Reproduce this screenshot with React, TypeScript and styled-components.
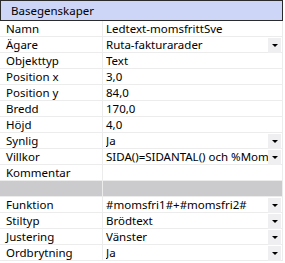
import React from 'react';
import styled, { createGlobalStyle } from 'styled-components';

const GlobalStyle = createGlobalStyle`
    html, body {
        margin: 0;
        padding: 0;
        background: #ffffff;
    }
    body {
        font-family: "Noto Sans", "DejaVu Sans", sans-serif;
        font-size: 11.5px;
        color: #000;
    }
`;

const Grid = styled.div`
    width: 283px;
    display: flex;
    flex-direction: column;
`;

const Header = styled.div`
    height: 19px;
    border: 1px solid #2b2b2b;
    background: #cdd6f6;
    display: flex;
    align-items: center;
    padding-left: 10px;
    line-height: 18px;
`;

const Row = styled.div<{ $blank?: boolean }>`
    height: 15px;
    display: grid;
    grid-template-columns: 103px 1fr;
    border-bottom: 1px solid #ececec;
    background: ${({ $blank }) => ($blank ? '#cbcbcd' : '#ffffff')};
`;

const Label = styled.div`
    padding-left: 6px;
    line-height: 16px;
    white-space: nowrap;
    overflow: hidden;
    border-right: 1px solid #ececec;
`;

const Value = styled.div`
    display: flex;
    align-items: center;
    min-width: 0;
    padding-left: 3px;
    border-right: 1px solid #ececec;
`;

const ValueText = styled.span`
    flex: 1;
    line-height: 16px;
    white-space: nowrap;
    overflow: hidden;
`;

const DropButton = styled.div`
    width: 13px;
    height: 15px;
    margin-right: 1px;
    background: #efeff1;
    display: flex;
    align-items: center;
    justify-content: center;

    &::after {
        content: '';
        border-left: 3px solid transparent;
        border-right: 3px solid transparent;
        border-top: 3px solid #000;
    }
`;

type Prop = { label: string; value: string; drop?: boolean; blank?: boolean };

const props: Prop[] = [
    { label: 'Namn', value: 'Ledtext-momsfrittSve' },
    { label: 'Ägare', value: 'Ruta-fakturarader', drop: true },
    { label: 'Objekttyp', value: 'Text' },
    { label: 'Position x', value: '3,0' },
    { label: 'Position y', value: '84,0' },
    { label: 'Bredd', value: '170,0' },
    { label: 'Höjd', value: '4,0' },
    { label: 'Synlig', value: 'Ja', drop: true },
    { label: 'Villkor', value: 'SIDA()=SIDANTAL() och %Moms', drop: true },
    { label: 'Kommentar', value: '' },
    { label: '', value: '', blank: true },
    { label: 'Funktion', value: '#momsfri1#+#momsfri2#', drop: true },
    { label: 'Stiltyp', value: 'Brödtext', drop: true },
    { label: 'Justering', value: 'Vänster', drop: true },
    { label: 'Ordbrytning', value: 'Ja', drop: true },
];

const App: React.FC = () => {
    return (
        <>
            <GlobalStyle />
            <Grid>
                <Header>Basegenskaper</Header>
                {props.map((p, i) => (
                    <Row key={i} $blank={p.blank}>
                        <Label>{p.label}</Label>
                        <Value>
                            <ValueText>{p.value}</ValueText>
                            {p.drop && <DropButton />}
                        </Value>
                    </Row>
                ))}
            </Grid>
        </>
    );
};

export default App;
